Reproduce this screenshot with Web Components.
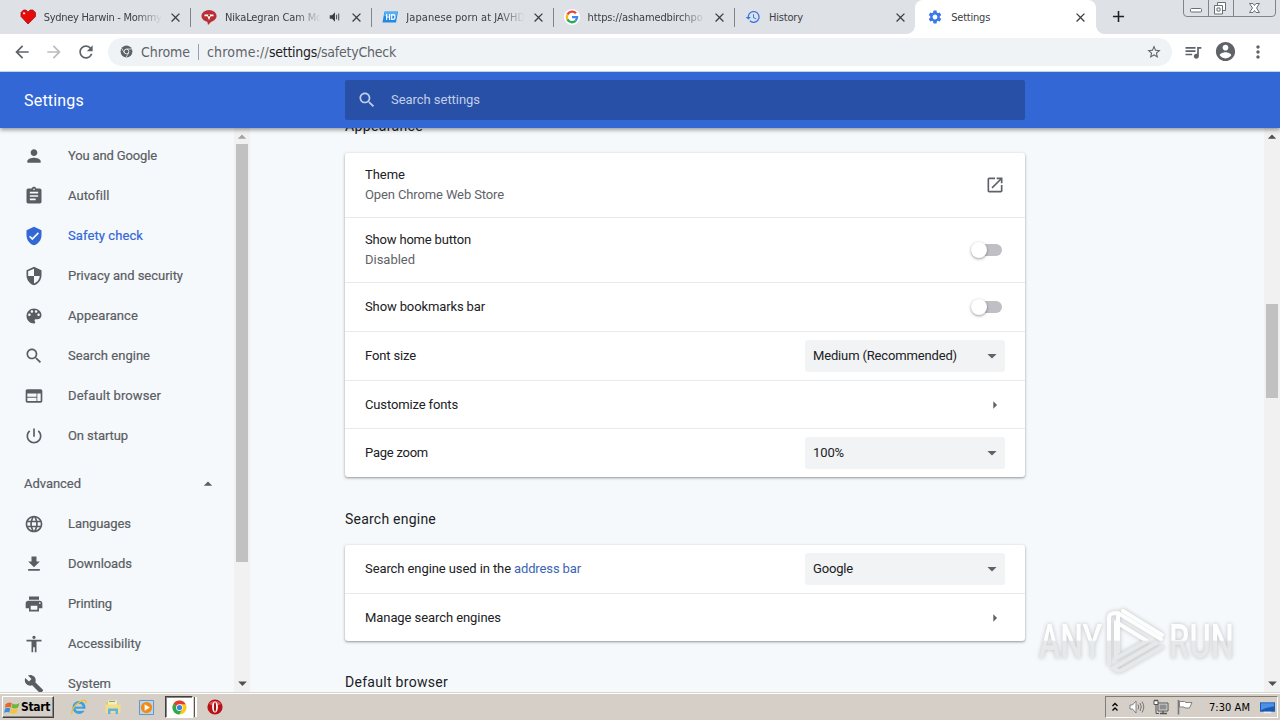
<!DOCTYPE html>
<html lang="en">
<head>
<meta charset="utf-8">
<title>Settings</title>
<style>
    html, body {
        margin: 0;
        width: 1280px;
        height: 720px;
        overflow: hidden;
        font-family: Roboto, "Liberation Sans", sans-serif;
        font-size: 13px;
        color: #202124;
    }
</style>
</head>
<body>
<desktop-screen></desktop-screen>

<script>
const PATHS = {
    back: 'M20 11H7.83l5.59-5.59L12 4l-8 8 8 8 1.41-1.41L7.83 13H20v-2z',
    forward: 'M12 4l-1.41 1.41L16.17 11H4v2h12.17l-5.58 5.59L12 20l8-8z',
    refresh: 'M17.65 6.35C16.2 4.9 14.21 4 12 4c-4.42 0-7.99 3.58-7.99 8s3.57 8 7.99 8c3.73 0 6.84-2.55 7.73-6h-2.08c-.82 2.33-3.04 4-5.65 4-3.31 0-6-2.69-6-6s2.69-6 6-6c1.66 0 3.14.69 4.22 1.78L13 11h7V4l-2.35 2.35z',
    star: 'M22 9.24l-7.19-.62L12 2 9.19 8.63 2 9.24l5.46 4.73L5.82 21 12 17.27 18.18 21l-1.63-7.03L22 9.24zM12 15.4l-3.76 2.27 1-4.28-3.32-2.88 4.38-.38L12 6.1l1.71 4.04 4.38.38-3.32 2.88 1 4.28L12 15.4z',
    queue: 'M15 6H3v2h12V6zm0 4H3v2h12v-2zM3 16h8v-2H3v2zM17 6v8.18c-.31-.11-.65-.18-1-.18-1.66 0-3 1.34-3 3s1.34 3 3 3 3-1.34 3-3V8h3V6h-5z',
    account: 'M12 2C6.48 2 2 6.48 2 12s4.48 10 10 10 10-4.48 10-10S17.52 2 12 2zm0 3c1.66 0 3 1.34 3 3s-1.34 3-3 3-3-1.34-3-3 1.34-3 3-3zm0 14.2c-2.5 0-4.71-1.28-6-3.22.03-1.99 4-3.08 6-3.08 1.99 0 5.97 1.09 6 3.08-1.29 1.94-3.5 3.22-6 3.22z',
    more: 'M12 8c1.1 0 2-.9 2-2s-.9-2-2-2-2 .9-2 2 .9 2 2 2zm0 2c-1.1 0-2 .9-2 2s.9 2 2 2 2-.9 2-2-.9-2-2-2zm0 6c-1.1 0-2 .9-2 2s.9 2 2 2 2-.9 2-2-.9-2-2-2z',
    search: 'M15.5 14h-.79l-.28-.27C15.41 12.59 16 11.11 16 9.5 16 5.91 13.09 3 9.5 3S3 5.91 3 9.5 5.91 16 9.5 16c1.61 0 3.09-.59 4.23-1.57l.27.28v.79l5 4.99L20.49 19l-4.99-5zm-6 0C7.01 14 5 11.99 5 9.5S7.01 5 9.5 5 14 7.01 14 9.5 11.99 14 9.5 14z',
    person: 'M12 12c2.21 0 4-1.79 4-4s-1.79-4-4-4-4 1.79-4 4 1.79 4 4 4zm0 2c-2.67 0-8 1.34-8 4v2h16v-2c0-2.66-5.33-4-8-4z',
    assignment: 'M19 3h-4.18C14.4 1.84 13.3 1 12 1c-1.3 0-2.4.84-2.82 2H5c-1.1 0-2 .9-2 2v14c0 1.1.9 2 2 2h14c1.1 0 2-.9 2-2V5c0-1.1-.9-2-2-2zm-7 0c.55 0 1 .45 1 1s-.45 1-1 1-1-.45-1-1 .45-1 1-1zm2 14H7v-2h7v2zm3-4H7v-2h10v2zm0-4H7V7h10v2z',
    verified: 'M12 1L3 5v6c0 5.55 3.84 10.74 9 12 5.16-1.26 9-6.45 9-12V5l-9-4zm-2 16l-4-4 1.41-1.41L10 14.17l6.59-6.59L18 9l-8 8z',
    security: 'M12 1L3 5v6c0 5.55 3.84 10.74 9 12 5.16-1.26 9-6.45 9-12V5l-9-4zm0 10.99h7c-.53 4.12-3.28 7.79-7 8.94V12H5V6.3l7-3.11v8.8z',
    palette: 'M12 3c-4.97 0-9 4.03-9 9s4.03 9 9 9c.83 0 1.5-.67 1.5-1.5 0-.39-.15-.74-.39-1.01-.23-.26-.38-.61-.38-.99 0-.83.67-1.5 1.5-1.5H16c2.76 0 5-2.24 5-5 0-4.42-4.03-8-9-8zm-5.5 9c-.83 0-1.5-.67-1.5-1.5S5.67 9 6.5 9 8 9.67 8 10.5 7.33 12 6.5 12zm3-4C8.67 8 8 7.33 8 6.5S8.67 5 9.5 5s1.5.67 1.5 1.5S10.33 8 9.5 8zm5 0c-.83 0-1.5-.67-1.5-1.5S13.67 5 14.5 5s1.5.67 1.5 1.5S15.33 8 14.5 8zm3 4c-.83 0-1.5-.67-1.5-1.5S16.67 9 17.5 9s1.5.67 1.5 1.5-.67 1.5-1.5 1.5z',
    web: 'M20 4H4c-1.1 0-1.99.9-1.99 2L2 18c0 1.1.9 2 2 2h16c1.1 0 2-.9 2-2V6c0-1.1-.9-2-2-2zm-5 14H4v-4h11v4zm0-5H4V9h11v4zm5 5h-4V9h4v9z',
    power: 'M13 3h-2v10h2V3zm4.83 2.17l-1.42 1.42C17.99 7.86 19 9.81 19 12c0 3.87-3.13 7-7 7s-7-3.13-7-7c0-2.19 1.01-4.14 2.58-5.42L6.17 5.17C4.23 6.82 3 9.26 3 12c0 4.97 4.03 9 9 9s9-4.03 9-9c0-2.74-1.23-5.18-3.17-6.83z',
    language: 'M11.99 2C6.47 2 2 6.48 2 12s4.47 10 9.99 10C17.52 22 22 17.52 22 12S17.52 2 11.99 2zm6.93 6h-2.95c-.32-1.25-.78-2.45-1.38-3.56 1.84.63 3.37 1.91 4.33 3.56zM12 4.04c.83 1.2 1.48 2.53 1.91 3.96h-3.82c.43-1.43 1.08-2.76 1.91-3.96zM4.26 14C4.1 13.36 4 12.69 4 12s.1-1.36.26-2h3.38c-.08.66-.14 1.32-.14 2 0 .68.06 1.34.14 2H4.26zm.82 2h2.95c.32 1.25.78 2.45 1.38 3.56-1.84-.63-3.37-1.9-4.33-3.56zm2.95-8H5.08c.96-1.66 2.49-2.93 4.33-3.56C8.81 5.55 8.35 6.75 8.03 8zM12 19.96c-.83-1.2-1.48-2.53-1.91-3.96h3.82c-.43 1.43-1.08 2.76-1.91 3.96zM14.34 14H9.66c-.09-.66-.16-1.32-.16-2 0-.68.07-1.35.16-2h4.68c.09.65.16 1.32.16 2 0 .68-.07 1.34-.16 2zm.25 5.56c.6-1.11 1.06-2.31 1.38-3.56h2.95c-.96 1.65-2.49 2.93-4.33 3.56zM16.36 14c.08-.66.14-1.32.14-2 0-.68-.06-1.34-.14-2h3.38c.16.64.26 1.31.26 2s-.1 1.36-.26 2h-3.38z',
    download: 'M19 9h-4V3H9v6H5l7 7 7-7zM5 18v2h14v-2H5z',
    print: 'M19 8H5c-1.66 0-3 1.34-3 3v6h4v4h12v-4h4v-6c0-1.66-1.34-3-3-3zm-3 11H8v-5h8v5zm3-7c-.55 0-1-.45-1-1s.45-1 1-1 1 .45 1 1-.45 1-1 1zm-1-9H6v4h12V3z',
    accessibility: 'M12 2c1.1 0 2 .9 2 2s-.9 2-2 2-2-.9-2-2 .9-2 2-2zm9 7h-6v13h-2v-6h-2v6H9V9H3V7h18v2z',
    build: 'M22.7 19l-9.1-9.1c.9-2.3.4-5-1.5-6.9-2-2-5-2.4-7.4-1.3L9 6 6 9 1.6 4.7C.4 7.1.9 10.1 2.9 12.1c1.9 1.9 4.6 2.4 6.9 1.5l9.1 9.1c.4.4 1 .4 1.4 0l2.3-2.3c.5-.4.5-1.1.1-1.4z',
    launch: 'M19 19H5V5h7V3H5c-1.11 0-2 .9-2 2v14c0 1.1.89 2 2 2h14c1.1 0 2-.9 2-2v-7h-2v7zM14 3v2h3.59l-9.83 9.83 1.41 1.41L19 6.41V10h2V3h-7z',
    history: 'M13 3c-4.97 0-9 4.03-9 9H1l3.89 3.89.07.14L9 12H6c0-3.87 3.13-7 7-7s7 3.13 7 7-3.13 7-7 7c-1.93 0-3.68-.79-4.94-2.06l-1.42 1.42C8.27 19.99 10.51 21 13 21c4.97 0 9-4.03 9-9s-4.03-9-9-9zm-1 5v5l4.28 2.54.72-1.21-3.5-2.08V8H12z',
    gear: 'M19.14 12.94c.04-.3.06-.61.06-.94 0-.32-.02-.64-.07-.94l2.03-1.58c.18-.14.23-.41.12-.61l-1.92-3.32c-.12-.22-.37-.29-.59-.22l-2.39.96c-.5-.38-1.03-.7-1.62-.94l-.36-2.54c-.04-.24-.24-.41-.48-.41h-3.84c-.24 0-.43.17-.47.41l-.36 2.54c-.59.24-1.13.57-1.62.94l-2.39-.96c-.22-.08-.47 0-.59.22L2.74 8.87c-.12.21-.08.47.12.61l2.03 1.58c-.05.3-.09.63-.09.94s.02.64.07.94l-2.03 1.58c-.18.14-.23.41-.12.61l1.92 3.32c.12.22.37.29.59.22l2.39-.96c.5.38 1.03.7 1.62.94l.36 2.54c.05.24.24.41.48.41h3.84c.24 0 .44-.17.47-.41l.36-2.54c.59-.24 1.13-.56 1.62-.94l2.39.96c.22.08.47 0 .59-.22l1.92-3.32c.12-.22.07-.47-.12-.61l-2.01-1.58zM12 15.6c-1.98 0-3.6-1.62-3.6-3.6s1.62-3.6 3.6-3.6 3.6 1.62 3.6 3.6-1.62 3.6-3.6 3.6z',
    close: 'M19 6.41L17.59 5 12 10.59 6.41 5 5 6.41 10.59 12 5 17.59 6.41 19 12 13.41 17.59 19 19 17.59 13.41 12z',
    add: 'M19 13h-6v6h-2v-6H5v-2h6V5h2v6h6v2z',
    volume: 'M3 9v6h4l5 5V4L7 9H3zm11-1v8h1.6V8zm3.6-2v12h1.6V6z',
    up: 'M7 14l5-5 5 5z',
    down: 'M6.5 9.5l5.5 5.5 5.5-5.5z',
    right: 'M10 7.5l4.5 4.5-4.5 4.5z'
};

// multi-colour pictures, all on a 16 unit grid
const PICTURES = {
    heart: '<path d="M8 15L1 7.5V3.5L3.5 1H6l2 2 2.2-2h2.6L15.5 3.6v4z" fill="#e60b0b" stroke="#a10606" stroke-width=".7"/><path d="M3 3.5h2.2v1.7H3z" fill="#ffd6d6"/>',
    cam: '<ellipse cx="8" cy="7" rx="7.6" ry="6" fill="#b92f35"/><path d="M6 11l5 1-4 4z" fill="#b92f35"/><path d="M3.5 5.4h9v1.9H9.6L8 11.2 6.4 7.3H3.5z" fill="#fff"/><circle cx="8" cy="6.4" r="1.1" fill="#b92f35"/>',
    hd: '<path d="M2.5 2.5H16L14 13.5H.5z" fill="#2389e6"/><path d="M2.9 3h12.5l-.8 4H2z" fill="#54b0f5"/><path d="M4.6 5v6M7.6 5v6M4.6 8h3M9.7 5.7v4.6h1.3q2 0 2-2.3t-2-2.3z" fill="none" stroke="#fff" stroke-width="1.2"/>',
    google: '<circle cx="8" cy="8" r="8" fill="#fff"/><g fill="none" stroke-width="2.3"><path d="M12 4.3A5.2 5.2 0 0 0 3.4 5.6" stroke="#ea4335"/><path d="M3.4 5.6a5.2 5.2 0 0 0 0 4.8" stroke="#fbbc05"/><path d="M3.4 10.4a5.2 5.2 0 0 0 8.2 1.4" stroke="#34a853"/><path d="M11.6 11.8A5.2 5.2 0 0 0 13.1 8.1H8" stroke="#4285f4"/></g>',
    chromeGrey: '<circle cx="8" cy="8" r="7.3" fill="#5f6368"/><circle cx="8" cy="8" r="2.9" fill="none" stroke="#f1f3f4" stroke-width="1.1"/><path d="M8 4.9h6.6M5.3 9.6L2.1 4.1M10.7 9.6l-3.2 5.6" stroke="#f1f3f4" stroke-width=".9"/>',
    chrome: '<circle cx="8" cy="8" r="7.5" fill="#fbc916"/><path d="M8 8L1.5 4.2A7.5 7.5 0 0 1 14.6 4.6H8z" fill="#e33b2e"/><path d="M8 8L1.5 4.2A7.5 7.5 0 0 0 7.6 15.5L11 9.8z" fill="#2da94f"/><circle cx="8" cy="8" r="3.6" fill="#fff"/><circle cx="8" cy="8" r="2.8" fill="#3e7fe8"/>',
    ie: '<circle cx="8" cy="8.4" r="5.1" fill="none" stroke="#3aa1e3" stroke-width="2.8"/><path d="M4 8.7h9.8" stroke="#3aa1e3" stroke-width="2"/><path d="M9.3 9.8h6v2h-6z" fill="#d6cfc8"/><path d="M1.2 15C-.7 12.2 4 5.5 9.5 2.4 13 .5 16 1 14.6 4.4" fill="none" stroke="#efc12c" stroke-width="1.3"/>',
    folder: '<path d="M1 3h5l1 1.5h7V9H1z" fill="#e8c564"/><path d="M3 1.5h9v5H3z" fill="#f5ecc0"/><path d="M4 2.5h6" stroke="#69b66c"/><path d="M.5 5.5h15V14H.5z" fill="#f4dd8a"/><path d="M3 15V9.5h10V15h-2.5v-3h-5v3z" fill="#5fb4e3"/>',
    media: '<path d="M.5.5h15v15H.5z" fill="#b9d6ee" stroke="#5a93c6"/><circle cx="8" cy="8" r="6" fill="#f28a13"/><path d="M6 4.5L11.5 8 6 11.5z" fill="#fff"/>',
    opera: '<circle cx="8" cy="8" r="7.6" fill="#ba1119"/><path d="M2 5a7 6 0 0 1 12 0Q8 8 2 5" fill="#e2555a"/><ellipse cx="8" cy="8" rx="2.9" ry="5.6" fill="#fff"/><ellipse cx="8" cy="8" rx="1.1" ry="4.8" fill="#a20d14"/>',
    flag: '<path d="M.5 4.6Q4 1.5 7.3 3.5L6 8Q3 6.5 0 8.5z" fill="#e8682a"/><path d="M8 3.8Q11.5 5.8 15.5 3.3L14 8Q10.5 10 6.8 8.2z" fill="#6fb63c"/><path d="M0 9.4Q3 7.4 5.8 9L4.5 13.4Q2 12-1 13.8z" fill="#3f8ed8"/><path d="M6.5 9.2Q10 11 13.7 9L12.4 13.5Q9 15.3 5.3 13.6z" fill="#f6c52d"/>',
    speaker: '<path d="M1 6h2.5L7 2v12L3.5 10H1z" fill="#fff" stroke="#777" stroke-width=".9"/><path d="M9 5.5q1.5 2.5 0 5M11 4q2.6 4 0 8M13 2.5q3.6 5.5 0 11" fill="none" stroke="#777"/>',
    network: '<path d="M5 4h10v8H5z" fill="#ddd" stroke="#555"/><path d="M6.5 5.5h7v5h-7z" fill="#8e8e8e"/><path d="M7 14.5h7M10 12v2" stroke="#555" stroke-width="1.3"/><path d="M1 1.5h4v4H1z" fill="#fff" stroke="#555"/><path d="M2 .5v2M4 .5v2M3 5.5v9h3" fill="none" stroke="#555"/>',
    tray: '<path d="M1.5 1v14.5" stroke="#777" stroke-width="1.6"/><path d="M2.5 2.5h5l1.5 1h6L12.5 9H8L7 8H2.5z" fill="#fff" stroke="#777" stroke-width=".9"/>',
    desk: '<path d="M0 2.5h16v10H0z" fill="#1b58b4"/><path d="M1 3.5h14V7Q7 7 1 11z" fill="#4b91e6"/><path d="M4 12.5h8v1.6H4z" fill="#e9eef5"/>'
};

class UiIcon extends HTMLElement {
    constructor() {
        super();
        this.attachShadow({ mode: 'open' });
    }

    connectedCallback() {
        const name = this.getAttribute('name');
        const size = this.getAttribute('size') || 20;
        const svg = PATHS[name]
            ? `<svg viewBox="0 0 24 24"><path fill="currentColor" d="${PATHS[name]}"/></svg>`
            : `<svg viewBox="0 0 16 16">${PICTURES[name]}</svg>`;
        this.shadowRoot.innerHTML = `
            <style>
                :host { display: block; flex: none; width: ${size}px; height: ${size}px; }
                svg { display: block; width: 100%; height: 100%; overflow: visible; }
            </style>${svg}`;
    }
}

// A single line of text, tracked out or in to fill the given width
class UiText extends HTMLElement {
    constructor() {
        super();
        this.attachShadow({ mode: 'open' });
        this.shadowRoot.innerHTML = `
            <style>
                :host { display: block; flex: none; white-space: nowrap; }
                span { display: inline-block; vertical-align: top; }
            </style><span><slot></slot></span>`;
    }

    connectedCallback() {
        const width = Number(this.getAttribute('w'));
        const span = this.shadowRoot.querySelector('span');
        const natural = span.getBoundingClientRect().width;
        if (width && natural) {
            this.style.letterSpacing = (width - natural) / this.textContent.length + 'px';
        }
    }
}

class BrowserTab extends HTMLElement {
    constructor() {
        super();
        this.attachShadow({ mode: 'open' });
    }

    connectedCallback() {
        const audio = this.hasAttribute('audio') ? '<ui-icon class="audio" name="volume" size="14"></ui-icon>' : '';
        this.shadowRoot.innerHTML = `
            <style>
                :host {
                    display: flex;
                    align-items: center;
                    box-sizing: border-box;
                    width: 181.3px;
                    height: 34px;
                    padding: 0 7px 0 11px;
                    position: relative;
                    font: 11px "DejaVu Sans Condensed", "DejaVu Sans", sans-serif;
                    font-stretch: condensed;
                    color: #3c4043;
                }
                :host([line])::after {
                    content: "";
                    position: absolute;
                    right: -1px;
                    top: 8px;
                    width: 1px;
                    height: 19px;
                    background: #80868b;
                }
                :host([active]) { background: #fff; border-radius: 8px 8px 0 0; padding-left: 12px; padding-right: 8px; }
                :host([active])::before, :host([active])::after {
                    content: "";
                    position: absolute;
                    bottom: 0;
                    width: 8px;
                    height: 8px;
                    background: radial-gradient(circle at 0 0, transparent 7.5px, #fff 8px);
                    left: -8px;
                }
                :host([active])::after {
                    left: auto;
                    right: -8px;
                    background: radial-gradient(circle at 100% 0, transparent 7.5px, #fff 8px);
                }
                .title {
                    flex: 1;
                    margin-left: 8px;
                    overflow: hidden;
                    white-space: nowrap;
                }
                :host([fade]) .title {
                    -webkit-mask-image: linear-gradient(90deg, #000 calc(100% - 26px), transparent);
                    mask-image: linear-gradient(90deg, #000 calc(100% - 26px), transparent);
                }
                .audio { margin: 0 7px 0 7px; }
                .x { margin-left: 6px; }
                .audio + .x { margin-left: 0; }
                .tint { color: #3b78e7; }
            </style>
            <ui-icon class="tint" name="${this.getAttribute('icon')}" size="16"></ui-icon>
            <div class="title"><slot></slot></div>
            ${audio}
            <ui-icon class="x" name="close" size="15"></ui-icon>`;
    }
}

class WindowControls extends HTMLElement {
    constructor() {
        super();
        this.attachShadow({ mode: 'open' });
        this.shadowRoot.innerHTML = `
            <style>
                :host { display: block; width: 93px; height: 17px; }
            </style>
            <svg width="93" height="17" fill="none" stroke="#80858d">
                <path d="M.5 0v13q0 3.5 3.5 3.5h85q3.5 0 3.5-3.5V0M25.5 0v16M50.5 0v16"/>
                <rect x="7.5" y="8.5" width="11" height="3.5" rx="1" fill="#fff" stroke="#6b6f76"/>
                <path d="M34.5 2.5h8v8h-8z" fill="#fff" stroke="#6b6f76"/>
                <path d="M31.5 5.5h8v8.5h-8z" fill="#fff" stroke="#6b6f76"/>
                <path d="M34 8h3v3h-3z" stroke="#6b6f76"/>
                <path d="M66.5 3.5h3.5l1.5 2 1.5-2h3.5l-3 4.5 3 4.5H73l-1.5-2-1.5 2h-3.5l3-4.5z" fill="#fff" stroke="#6b6f76"/>
            </svg>`;
    }
}

class BrowserToolbar extends HTMLElement {
    constructor() {
        super();
        this.attachShadow({ mode: 'open' });
        this.shadowRoot.innerHTML = `
            <style>
                :host {
                    display: flex;
                    align-items: center;
                    box-sizing: border-box;
                    height: 38px;
                    padding: 0 12px 2px;
                    background: #fff;
                    border-bottom: 1px solid #c3e3e6;
                    color: #5f6368;
                }
                .nav { margin-right: 12px; }
                .off { color: #babcbe; }
                .url {
                    display: flex;
                    flex: 1;
                    align-items: center;
                    height: 28px;
                    margin: 0 11px 0 0;
                    padding: 0 10px 0 12px;
                    border-radius: 14px;
                    background: #f0f3f5;
                    font: 14px "DejaVu Sans Condensed", "DejaVu Sans", sans-serif;
                    font-stretch: condensed;
                }
                .name { margin-left: 8px; }
                .bar { width: 1px; height: 16px; margin: 0 8px; background: #9aa0a6; }
                .dark { color: #202124; }
                .star { margin-left: auto; }
            </style>
            <ui-icon class="nav" name="back"></ui-icon>
            <ui-icon class="nav off" name="forward"></ui-icon>
            <ui-icon class="nav" name="refresh"></ui-icon>
            <div class="url">
                <ui-icon name="chromeGrey" size="13"></ui-icon>
                <ui-text class="name" w="49">Chrome</ui-text>
                <span class="bar"></span>
                <ui-text w="62">chrome://</ui-text><ui-text class="dark" w="48">settings</ui-text><ui-text w="79">/safetyCheck</ui-text>
                <ui-icon class="star" name="star" size="16"></ui-icon>
            </div>
            <ui-icon name="queue"></ui-icon>
            <ui-icon name="account" size="23" style="margin: 0 11px"></ui-icon>
            <ui-icon name="more"></ui-icon>`;
    }
}

class SettingsHeader extends HTMLElement {
    constructor() {
        super();
        this.attachShadow({ mode: 'open' });
        this.shadowRoot.innerHTML = `
            <style>
                :host {
                    display: flex;
                    align-items: center;
                    height: 56px;
                    background: #3367d6;
                    color: #fff;
                    position: relative;
                    z-index: 1;
                    box-shadow: 0 2px 4px rgba(0, 0, 0, .38);
                }
                .title { width: 321px; margin-left: 24px; font-size: 16px; }
                .box {
                    display: flex;
                    align-items: center;
                    box-sizing: border-box;
                    width: 680px;
                    height: 40px;
                    padding-left: 12px;
                    border-radius: 2px;
                    background: #2950a7;
                    color: #c2cfea;
                }
                .box ui-text { margin-left: 14px; padding-bottom: 2px; }
            </style>
            <div class="title"><ui-text w="60">Settings</ui-text></div>
            <div class="box"><ui-icon name="search"></ui-icon><ui-text w="89">Search settings</ui-text></div>`;
    }
}

class MenuItem extends HTMLElement {
    constructor() {
        super();
        this.attachShadow({ mode: 'open' });
    }

    connectedCallback() {
        this.shadowRoot.innerHTML = `
            <style>
                :host {
                    display: flex;
                    align-items: center;
                    height: 40px;
                    padding-left: 24px;
                    color: #5a5e63;
                }
                :host([selected]) { color: #3367d6; }
                ui-text { margin-left: 24px; padding-bottom: 2px; -webkit-text-stroke: .2px; }
            </style>
            <ui-icon name="${this.getAttribute('icon')}"></ui-icon>
            <ui-text w="${this.getAttribute('w')}">${this.getAttribute('label')}</ui-text>`;
    }
}

class ScrollTrack extends HTMLElement {
    constructor() {
        super();
        this.attachShadow({ mode: 'open' });
    }

    connectedCallback() {
        this.shadowRoot.innerHTML = `
            <style>
                :host {
                    display: flex;
                    flex-direction: column;
                    align-items: center;
                    flex: none;
                    box-sizing: border-box;
                    width: 16px;
                    height: 100%;
                    background: #f1f1f1;
                    color: #505050;
                }
                .thumb {
                    width: 12px;
                    height: ${this.getAttribute('size')}px;
                    margin-top: ${this.getAttribute('start')}px;
                    background: #c1c1c1;
                }
                .first { margin: -1px 0 -3px; color: var(--first, #505050); }
                .end { margin-top: auto; margin-bottom: -1px; }
            </style>
            <ui-icon class="first" name="up" size="20"></ui-icon>
            <div class="thumb"></div>
            <ui-icon class="end" name="down" size="19"></ui-icon>`;
    }
}

class SettingsMenu extends HTMLElement {
    constructor() {
        super();
        this.attachShadow({ mode: 'open' });
        const main = [
            ['person', 'You and Google', 89], ['assignment', 'Autofill', 41],
            ['verified', 'Safety check', 75], ['security', 'Privacy and security', 115],
            ['palette', 'Appearance', 70], ['search', 'Search engine', 82],
            ['web', 'Default browser', 93], ['power', 'On startup', 60]
        ];
        const advanced = [
            ['language', 'Languages', 63], ['download', 'Downloads', 64],
            ['print', 'Printing', 44], ['accessibility', 'Accessibility', 73],
            ['build', 'System', 43]
        ];
        const item = ([icon, label, w]) =>
            `<menu-item icon="${icon}" label="${label}" w="${w}" ${icon === 'verified' ? 'selected' : ''}></menu-item>`;
        this.shadowRoot.innerHTML = `
            <style>
                :host { display: flex; width: 250px; height: 564px; flex: none; }
                .list { flex: 1; padding-top: 8px; overflow: hidden; }
                .group {
                    display: flex;
                    align-items: center;
                    justify-content: space-between;
                    height: 40px;
                    margin-top: 8px;
                    padding: 0 16px 0 24px;
                    color: #5a5e63;
                    -webkit-text-stroke: .2px;
                }
                .group ui-text { padding-bottom: 2px; }
                scroll-track { --first: #a3a3a3; }
            </style>
            <div class="list">
                ${main.map(item).join('')}
                <div class="group"><ui-text w="57">Advanced</ui-text><ui-icon name="up"></ui-icon></div>
                ${advanced.map(item).join('')}
            </div>
            <scroll-track start="0" size="418"></scroll-track>`;
    }
}

class SettingsCard extends HTMLElement {
    constructor() {
        super();
        this.attachShadow({ mode: 'open' });
        this.shadowRoot.innerHTML = `
            <style>
                :host {
                    display: block;
                    border-radius: 3px;
                    background: #fff;
                    box-shadow: 0 1px 2px rgba(60, 64, 67, .4), 0 1px 3px 1px rgba(60, 64, 67, .12);
                }
            </style><slot></slot>`;
    }
}

class SettingsRow extends HTMLElement {
    constructor() {
        super();
        this.attachShadow({ mode: 'open' });
    }

    connectedCallback() {
        this.shadowRoot.innerHTML = `
            <style>
                :host {
                    display: flex;
                    align-items: center;
                    justify-content: space-between;
                    box-sizing: border-box;
                    height: ${this.getAttribute('h')}px;
                    padding: 0 20px;
                    border-top: 1px solid #e8eaec;
                }
                :host([first]) { border-top: 0; }
                .text { display: flex; flex-direction: column; line-height: 20px; }
                .label { display: flex; gap: 3px; }
                ::slotted([slot="sub"]) { color: #5f6368; }
            </style>
            <div class="text"><div class="label"><slot></slot></div><slot name="sub"></slot></div>
            <slot name="end"></slot>`;
    }
}

class SelectBox extends HTMLElement {
    constructor() {
        super();
        this.attachShadow({ mode: 'open' });
        this.shadowRoot.innerHTML = `
            <style>
                :host {
                    display: flex;
                    align-items: center;
                    justify-content: space-between;
                    box-sizing: border-box;
                    width: 200px;
                    height: 32px;
                    padding: 0 3px 0 8px;
                    border-radius: 3px;
                    background: #f1f3f4;
                }
                ::slotted(ui-text) { padding-bottom: 2px; }
                ui-icon { color: #5f6368; }
            </style>
            <slot></slot><ui-icon name="down"></ui-icon>`;
    }
}

class ToggleSwitch extends HTMLElement {
    constructor() {
        super();
        this.attachShadow({ mode: 'open' });
        this.shadowRoot.innerHTML = `
            <style>
                :host { display: flex; align-items: center; width: 28px; height: 12px; margin-right: 3px; border-radius: 6px; background: #bfbfc5; }
                i {
                    width: 16px;
                    height: 16px;
                    margin-left: -3px;
                    border-radius: 50%;
                    background: #fff;
                    box-shadow: 0 1px 3px rgba(0, 0, 0, .4);
                }
            </style><i></i>`;
    }
}

class SettingsContent extends HTMLElement {
    constructor() {
        super();
        this.attachShadow({ mode: 'open' });
        this.shadowRoot.innerHTML = `
            <style>
                :host { display: block; flex: 1; height: 564px; padding-left: 95px; overflow: hidden; }
                .column { width: 680px; margin-top: -12px; }
                .heading { height: 20px; line-height: 20px; font-size: 14px; }
                settings-card { margin: 17px 0 32px; }
                a { color: #3b64b5; }
                .arrow, .launch { color: #5f6368; }
            </style>
            <div class="column">
                <div class="heading"><ui-text w="78">Appearance</ui-text></div>
                <settings-card>
                    <settings-row h="64" first>
                        <ui-text w="40">Theme</ui-text>
                        <ui-text slot="sub" w="139">Open Chrome Web Store</ui-text>
                        <ui-icon slot="end" class="launch" name="launch"></ui-icon>
                    </settings-row>
                    <settings-row h="65">
                        <ui-text w="106">Show home button</ui-text>
                        <ui-text slot="sub" w="50">Disabled</ui-text>
                        <toggle-switch slot="end"></toggle-switch>
                    </settings-row>
                    <settings-row h="49"><ui-text w="120">Show bookmarks bar</ui-text><toggle-switch slot="end"></toggle-switch></settings-row>
                    <settings-row h="49"><ui-text w="51">Font size</ui-text><select-box slot="end"><ui-text w="144">Medium (Recommended)</ui-text></select-box></settings-row>
                    <settings-row h="48"><ui-text w="93">Customize fonts</ui-text><ui-icon slot="end" class="arrow" name="right"></ui-icon></settings-row>
                    <settings-row h="49"><ui-text w="63">Page zoom</ui-text><select-box slot="end"><ui-text w="31">100%</ui-text></select-box></settings-row>
                </settings-card>
                <div class="heading"><ui-text w="91">Search engine</ui-text></div>
                <settings-card style="margin-top: 16px; margin-bottom: 31px">
                    <settings-row h="48" first>
                        <ui-text w="146">Search engine used in the</ui-text><a><ui-text w="67">address bar</ui-text></a>
                        <select-box slot="end"><ui-text w="40">Google</ui-text></select-box>
                    </settings-row>
                    <settings-row h="48"><ui-text w="136">Manage search engines</ui-text><ui-icon slot="end" class="arrow" name="right"></ui-icon></settings-row>
                </settings-card>
                <div class="heading"><ui-text w="103">Default browser</ui-text></div>
            </div>`;
    }
}

class WaterMark extends HTMLElement {
    constructor() {
        super();
        this.attachShadow({ mode: 'open' });
        this.shadowRoot.innerHTML = `
            <style>
                :host { display: block; position: absolute; left: 1030px; top: 604px; }
                svg { display: block; overflow: visible; filter: drop-shadow(0 0 2px rgba(90, 90, 90, .36)); }
                text { font: 500 49px Roboto, sans-serif; }
            </style>
            <svg width="222" height="80">
                <defs>
                    <linearGradient id="g" gradientUnits="userSpaceOnUse" x1="0" y1="0" x2="0" y2="74">
                        <stop offset=".49" stop-color="#fdfefe"/><stop offset=".5" stop-color="#e6e8e9"/>
                    </linearGradient>
                </defs>
                <g fill="url(#g)">
                    <text x="9" y="54" textLength="63" lengthAdjust="spacingAndGlyphs">ANY</text>
                    <text x="139" y="54" textLength="65" lengthAdjust="spacingAndGlyphs">RUN</text>
                </g>
                <g fill="none" stroke="url(#g)" stroke-width="4" stroke-linejoin="round" stroke-linecap="round">
                    <path d="M132 43L92 66q-5 2-9-2l43-25"/>
                    <path d="M79 60V14q0-5 7-5M88 48V9l43 26"/>
                    <path d="M86 54V18l31 19z"/>
                    <path d="M93 7l39 24"/>
                </g>
            </svg>`;
    }
}

class TaskBar extends HTMLElement {
    constructor() {
        super();
        this.attachShadow({ mode: 'open' });
        this.shadowRoot.innerHTML = `
            <style>
                :host {
                    display: flex;
                    align-items: center;
                    box-sizing: border-box;
                    height: 28px;
                    padding: 1px 2px 0 2px;
                    background: #d6cfc8;
                    border-top: 1px solid #d8d6cd;
                    box-shadow: inset 0 1px #fff;
                    color: #000;
                    font: 11px "DejaVu Sans Condensed", "DejaVu Sans", sans-serif;
                    font-stretch: condensed;
                }
                .start, .open {
                    display: flex;
                    align-items: center;
                    box-sizing: border-box;
                    height: 22px;
                    border: 1px solid;
                }
                .start {
                    width: 52px;
                    padding-left: 2px;
                    gap: 1px;
                    border-color: #fff #404040 #404040 #fff;
                    box-shadow: inset -1px -1px #8a867f;
                    font: bold 12px "DejaVu Sans Condensed", "DejaVu Sans", sans-serif;
                    font-stretch: condensed;
                }
                .quick { display: flex; align-items: center; margin-left: 17px; }
                .quick > ui-icon { margin-right: 18px; }
                .open {
                    width: 28px;
                    justify-content: center;
                    margin-left: -7px;
                    background: #fff;
                    border-color: #404040 #fff #fff #404040;
                    box-shadow: inset 1px 1px #8a867f;
                }
                .edge { width: 1px; height: 20px; margin: 0 10px 0 1px; background: #555; border-right: 2px solid #fff; }
                .tray {
                    display: flex;
                    align-items: center;
                    box-sizing: border-box;
                    width: 173px;
                    height: 22px;
                    margin-left: auto;
                    padding-left: 6px;
                    border: 1px solid;
                    border-color: #807c76 #fff #fff #807c76;
                }
                .tray svg { flex: none; margin-right: 3px; }
                .tray ui-icon { margin-left: 8px; }
                .tray ui-text { margin-left: 16px; }
                .tray .desk { margin-left: 10px; }
            </style>
            <div class="start"><ui-icon name="flag" size="15"></ui-icon><ui-text w="29">Start</ui-text></div>
            <div class="quick">
                <ui-icon name="ie" size="16"></ui-icon>
                <ui-icon name="folder" size="16"></ui-icon>
                <ui-icon name="media" size="15"></ui-icon>
                <div class="open"><ui-icon name="chrome" size="15"></ui-icon></div>
                <div class="edge"></div>
                <ui-icon name="opera" size="16"></ui-icon>
            </div>
            <div class="tray">
                <svg width="6" height="10" fill="none" stroke="#000" stroke-width="1.3"><path d="M.5 4L3 1.5 5.5 4M.5 8.5L3 6l2.5 2.5"/></svg>
                <ui-icon name="speaker" size="16"></ui-icon>
                <ui-icon name="network" size="16"></ui-icon>
                <ui-icon name="tray" size="16"></ui-icon>
                <ui-text w="41">7:30 AM</ui-text>
                <ui-icon class="desk" name="desk" size="15"></ui-icon>
            </div>`;
    }
}

class DesktopScreen extends HTMLElement {
    constructor() {
        super();
        this.attachShadow({ mode: 'open' });
        this.shadowRoot.innerHTML = `
            <style>
                :host { display: flex; flex-direction: column; width: 1280px; height: 720px; overflow: hidden; position: relative; }
                .strip { display: flex; height: 34px; padding-left: 8.7px; background: #dee1e6; color: #202124; flex: none; }
                .plus { margin: 7px 0 0 13px; }
                window-controls { margin: 0 4px 0 auto; }
                .page { display: flex; height: 564px; background: #f6f9fc; }
            </style>
            <div class="strip">
                <browser-tab icon="heart" line fade><ui-text w="118">Sydney Harwin - Mommy</ui-text></browser-tab>
                <browser-tab icon="cam" line fade audio><ui-text w="97">NikaLegran Cam Mo</ui-text></browser-tab>
                <browser-tab icon="hd" line fade><ui-text w="119">Japanese porn at JAVHD</ui-text></browser-tab>
                <browser-tab icon="google" line fade><ui-text w="115">https://ashamedbirchpo</ui-text></browser-tab>
                <browser-tab icon="history"><ui-text w="34">History</ui-text></browser-tab>
                <browser-tab icon="gear" active><ui-text w="39">Settings</ui-text></browser-tab>
                <ui-icon class="plus" name="add" size="19"></ui-icon>
                <window-controls></window-controls>
            </div>
            <browser-toolbar></browser-toolbar>
            <settings-header></settings-header>
            <div class="page">
                <settings-menu></settings-menu>
                <settings-content></settings-content>
                <scroll-track start="160" size="94"></scroll-track>
            </div>
            <task-bar></task-bar>
            <water-mark></water-mark>`;
    }
}

customElements.define('ui-icon', UiIcon);
customElements.define('ui-text', UiText);
customElements.define('browser-tab', BrowserTab);
customElements.define('window-controls', WindowControls);
customElements.define('browser-toolbar', BrowserToolbar);
customElements.define('settings-header', SettingsHeader);
customElements.define('menu-item', MenuItem);
customElements.define('scroll-track', ScrollTrack);
customElements.define('settings-menu', SettingsMenu);
customElements.define('settings-card', SettingsCard);
customElements.define('settings-row', SettingsRow);
customElements.define('select-box', SelectBox);
customElements.define('toggle-switch', ToggleSwitch);
customElements.define('settings-content', SettingsContent);
customElements.define('water-mark', WaterMark);
customElements.define('task-bar', TaskBar);
customElements.define('desktop-screen', DesktopScreen);
</script>
</body>
</html>
